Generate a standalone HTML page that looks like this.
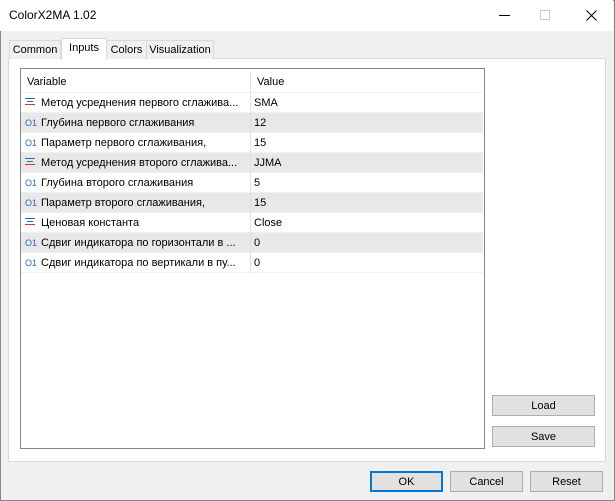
<!DOCTYPE html>
<html><head><meta charset="utf-8"><style>
*{margin:0;padding:0;box-sizing:border-box}
body{width:615px;height:501px;overflow:hidden;background:#f0f0f0;font-family:"Liberation Sans",sans-serif;font-size:11px;color:#000;position:relative}
.win{position:absolute;left:0;top:0;width:615px;height:501px;border:1px solid #888;}
.title{position:absolute;left:0;top:0;width:613px;height:31px;background:#fff}
.title span{position:absolute;left:9px;top:8px;font-size:12px}
.tab{position:absolute;top:40px;height:19px;border:1px solid #d9d9d9;border-bottom:none;background:#f0f0f0;padding:3px 0 0;text-align:center;font-size:11px}
.panel{position:absolute;left:8px;top:58px;width:598px;height:404px;background:#fff;border:1px solid #d9d9d9}
.list{position:absolute;left:20px;top:68px;width:465px;height:381px;border:1px solid #828790;background:#fff}
.row{position:absolute;left:0;width:462px;height:20px;border-bottom:1px solid #f0f0f0}
.row.g{background:#e8e8e8}
.row .a{position:absolute;left:20px;top:4px;white-space:nowrap}
.row .b{position:absolute;left:233px;top:4px}
.row .d{position:absolute;left:229px;top:0;height:20px;border-left:1px solid #e0e0e0}
.ic{position:absolute;left:4px;top:5px;width:10px;font-size:9px;color:#2a6ab5;line-height:10px}
.en{position:absolute;left:4px;top:5px;width:10px;height:10px}
.en i{display:block;height:1px;margin-bottom:2px;background:#2a6ab5}
.en i.s{width:6px;margin-left:2px}
.en i.r{background:#d33}
.btn{position:absolute;height:21px;border:1px solid #adadad;background:#e1e1e1;text-align:center;padding-top:4px;font-size:11px}
</style></head><body>
<div class="win"></div>
<div class="title"><span>ColorX2MA 1.02</span>
<div style="position:absolute;left:499px;top:15px;width:11px;height:1px;background:#000"></div>
<div style="position:absolute;left:540px;top:10px;width:10px;height:10px;border:1px solid #ccc"></div>
<svg style="position:absolute;left:586px;top:10px" width="11" height="11"><path d="M0.5 0.5L10.5 10.5M10.5 0.5L0.5 10.5" stroke="#000" stroke-width="1"/></svg>
</div>
<div class="panel"></div>
<div class="tab" style="left:9px;width:52px">Common</div>
<div class="tab" style="left:106px;width:41px">Colors</div>
<div class="tab" style="left:146px;width:68px">Visualization</div>
<div class="tab" style="left:61px;top:38px;width:46px;height:22px;background:#fff;border-color:#d9d9d9;padding-top:3px">Inputs</div>
<div class="list">
<div class="row" style="top:3px;height:21px"><span class="a" style="left:6px">Variable</span><span class="d"></span><span class="b" style="left:236px">Value</span></div>
<div class="row" style="top:24px"><span class="en"><i></i><i class="s"></i><i class="r"></i></span><span class="a">Метод усреднения первого сглажива...</span><span class="d"></span><span class="b">SMA</span></div>
<div class="row g" style="top:44px"><span class="ic">O1</span><span class="a">Глубина  первого сглаживания</span><span class="d"></span><span class="b">12</span></div>
<div class="row" style="top:64px"><span class="ic">O1</span><span class="a">Параметр первого сглаживания,</span><span class="d"></span><span class="b">15</span></div>
<div class="row g" style="top:84px"><span class="en"><i></i><i class="s"></i><i class="r"></i></span><span class="a">Метод усреднения второго сглажива...</span><span class="d"></span><span class="b">JJMA</span></div>
<div class="row" style="top:104px"><span class="ic">O1</span><span class="a">Глубина  второго сглаживания</span><span class="d"></span><span class="b">5</span></div>
<div class="row g" style="top:124px"><span class="ic">O1</span><span class="a">Параметр второго сглаживания,</span><span class="d"></span><span class="b">15</span></div>
<div class="row" style="top:144px"><span class="en"><i></i><i class="s"></i><i class="r"></i></span><span class="a">Ценовая константа</span><span class="d"></span><span class="b">Close</span></div>
<div class="row g" style="top:164px"><span class="ic">O1</span><span class="a">Сдвиг индикатора по горизонтали в ...</span><span class="d"></span><span class="b">0</span></div>
<div class="row" style="top:184px"><span class="ic">O1</span><span class="a">Сдвиг индикатора по вертикали в пу...</span><span class="d"></span><span class="b">0</span></div>
</div>
<div class="btn" style="left:492px;top:395px;width:103px">Load</div>
<div class="btn" style="left:492px;top:426px;width:103px">Save</div>
<div class="btn" style="left:370px;top:471px;width:73px;border:2px solid #0078d7;padding-top:3px">OK</div>
<div class="btn" style="left:450px;top:471px;width:73px">Cancel</div>
<div class="btn" style="left:530px;top:471px;width:73px">Reset</div>
</body></html>
